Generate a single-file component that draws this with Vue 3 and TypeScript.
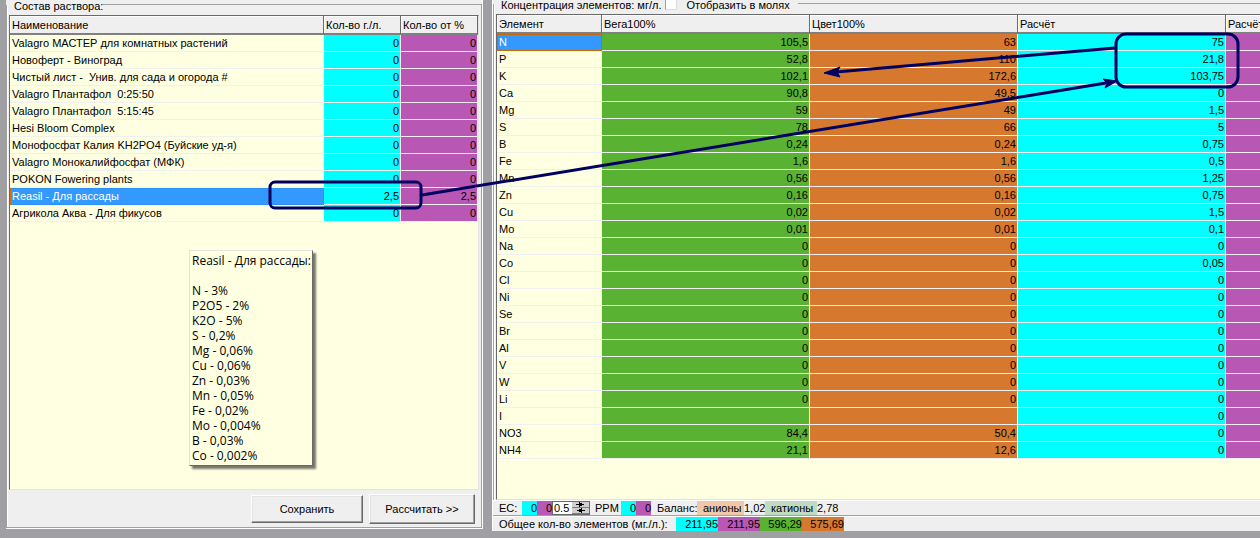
<script setup lang="ts">
import { ref } from 'vue'

interface Fertilizer {
  name: string
  amount: string
  percent: string
}

const fertilizers = ref<Fertilizer[]>([
  { name: 'Valagro МАСТЕР для комнатных растений', amount: '0', percent: '0' },
  { name: 'Новоферт - Виноград', amount: '0', percent: '0' },
  { name: 'Чистый лист -  Унив. для сада и огорода #', amount: '0', percent: '0' },
  { name: 'Valagro Плантафол  0:25:50', amount: '0', percent: '0' },
  { name: 'Valagro Плантафол  5:15:45', amount: '0', percent: '0' },
  { name: 'Hesi Bloom Complex', amount: '0', percent: '0' },
  { name: 'Монофосфат Калия KH2PO4 (Буйские уд-я)', amount: '0', percent: '0' },
  { name: 'Valagro Монокалийфосфат (МФК)', amount: '0', percent: '0' },
  { name: 'POKON Fowering plants', amount: '0', percent: '0' },
  { name: 'Reasil - Для рассады', amount: '2,5', percent: '2,5' },
  { name: 'Агрикола Аква - Для фикусов', amount: '0', percent: '0' },
])
const selected = ref(9)

const elements: [string, string, string, string][] = [
  ['N', '105,5', '63', '75'],
  ['P', '52,8', '110', '21,8'],
  ['K', '102,1', '172,6', '103,75'],
  ['Ca', '90,8', '49,5', '0'],
  ['Mg', '59', '49', '1,5'],
  ['S', '78', '66', '5'],
  ['B', '0,24', '0,24', '0,75'],
  ['Fe', '1,6', '1,6', '0,5'],
  ['Mn', '0,56', '0,56', '1,25'],
  ['Zn', '0,16', '0,16', '0,75'],
  ['Cu', '0,02', '0,02', '1,5'],
  ['Mo', '0,01', '0,01', '0,1'],
  ['Na', '0', '0', '0'],
  ['Co', '0', '0', '0,05'],
  ['Cl', '0', '0', '0'],
  ['Ni', '0', '0', '0'],
  ['Se', '0', '0', '0'],
  ['Br', '0', '0', '0'],
  ['Al', '0', '0', '0'],
  ['V', '0', '0', '0'],
  ['W', '0', '0', '0'],
  ['Li', '0', '0', '0'],
  ['I', '', '', '0'],
  ['NO3', '84,4', '50,4', '0'],
  ['NH4', '21,1', '12,6', '0'],
]

const hint = [
  'N - 3%', 'P2O5 - 2%', 'K2O - 5%', 'S - 0,2%', 'Mg - 0,06%', 'Cu - 0,06%',
  'Zn - 0,03%', 'Mn - 0,05%', 'Fe - 0,02%', 'Mo - 0,004%', 'B - 0,03%', 'Co - 0,002%',
]
const inMoles = ref(false)
const step = ref('0.5')
</script>

<template>
  <main class="window">
    <section class="panel solution">
      <div class="title"><h2>Состав раствора:</h2></div>
      <div class="group">
        <div class="grid-box">
          <table>
            <colgroup><col /><col class="c-amount" /><col class="c-percent" /></colgroup>
            <thead>
              <tr><th>Наименование</th><th>Кол-во г./л.</th><th>Кол-во от %</th></tr>
            </thead>
            <tbody>
              <tr v-for="(f, i) in fertilizers" :key="f.name" @click="selected = i">
                <td :class="{ picked: i === selected }">{{ f.name }}</td>
                <td class="num cyan">{{ f.amount }}</td>
                <td class="num purple">{{ f.percent }}</td>
              </tr>
            </tbody>
          </table>
          <div class="hint" role="tooltip">
            <p class="hint-name">Reasil - Для рассады:</p>
            <p v-for="h in hint" :key="h">{{ h }}</p>
          </div>
        </div>
        <div class="actions">
          <button type="button" class="save">Сохранить</button>
          <button type="button" class="calc">Рассчитать &gt;&gt;</button>
        </div>
      </div>
    </section>

    <section class="panel result">
      <div class="title">
        <h2>Концентрация элементов: мг/л.</h2>
        <label><input v-model="inMoles" type="checkbox" />Отобразить в молях</label>
      </div>
      <div class="group">
        <div class="grid-box">
          <table>
            <colgroup><col class="c-element" /><col /><col /><col /><col /></colgroup>
            <thead>
              <tr><th>Элемент</th><th>Вега100%</th><th>Цвет100%</th><th>Расчёт</th><th>Расчёт</th></tr>
            </thead>
            <tbody>
              <tr v-for="(e, i) in elements" :key="e[0]">
                <td :class="{ focused: i === 0 }">{{ e[0] }}</td>
                <td class="num green">{{ e[1] }}</td>
                <td class="num orange">{{ e[2] }}</td>
                <td class="num cyan">{{ e[3] }}</td>
                <td class="num purple"></td>
              </tr>
            </tbody>
          </table>
        </div>
      </div>
      <div class="status">
        <label for="ec-step" class="ec">EC:</label>
        <output class="short cyan">0</output>
        <output class="short purple">0</output>
        <span class="spin">
          <input id="ec-step" v-model="step" type="text" />
          <span class="arrows">
            <button type="button" aria-label="Больше"><svg viewBox="0 0 16 6"><path d="M7 0h1v1h2v1h2v1h-2v1H8v1H7V3H4V2h3z" /></svg></button>
            <button type="button" aria-label="Меньше"><svg viewBox="0 0 16 6"><path d="M9 0h1v2h3v1h-3v2H9V4H7V3H5V2h2V1h2z" /></svg></button>
          </span>
        </span>
        <span class="ppm">PPM</span>
        <output class="short cyan">0</output>
        <output class="short purple">0</output>
        <span class="balance">Баланс:</span>
        <span class="ions anions">анионы</span>
        <span class="ratio">1,02</span>
        <span class="ions cations">катионы</span>
        <span class="ratio">2,78</span>
      </div>
      <div class="status totals">
        <span class="total-label">Общее кол-во элементов (мг./л.):</span>
        <output class="total cyan">211,95</output>
        <output class="total purple">211,95</output>
        <output class="total green">596,29</output>
        <output class="total orange">575,69</output>
      </div>
    </section>

    <svg class="marks" width="1260" height="538" viewBox="0 0 1260 538" aria-hidden="true">
      <rect x="270" y="182" width="151" height="26" rx="5" />
      <rect x="1116" y="34" width="122" height="53" rx="10" />
      <path d="M1115 48L836 72M422 195L1106 83" />
      <path class="head" d="M824 73L840 67L837 72L840 77z M1117 81L1103 79L1107 83L1105 88z" />
    </svg>
  </main>
</template>

<style>
body {
  margin: 0;
  background: #a09fa3;
}
</style>

<style scoped>
* {
  box-sizing: border-box;
}
.window {
  position: relative;
  display: grid;
  grid-template-columns: 477px minmax(0, 1fr);
  column-gap: 9px;
  min-height: 100vh;
  padding-left: 6px;
  overflow: hidden;
  background: #a09fa3;
  color: #000;
  font: 11px/16px "Liberation Sans", Arial, sans-serif;
}
h2,
p {
  margin: 0;
  font: inherit;
}
.panel {
  display: flex;
  flex-direction: column;
  background: #efefef;
}
.solution {
  margin-bottom: 9px;
  border-right: 1px solid #fff;
  border-bottom: 1px solid #fff;
}
.result {
  margin-bottom: 7px;
  border-left: 1px solid #fff;
}
.title {
  display: flex;
  height: 5px;
  padding-left: 8px;
  line-height: 12px;
  white-space: nowrap;
}
.title::after {
  content: "";
  flex: 1;
  border-bottom: 1px solid #a0a0a0;
}
.title h2,
.title label {
  position: relative;
  z-index: 1;
}
.result .title {
  height: 4px;
  line-height: 10px;
}
.title label {
  display: flex;
  gap: 9px;
  margin-right: 8px;
}
.title input {
  appearance: none;
  width: 12px;
  height: 12px;
  margin: -2px 0 0 4px;
  border: 1px solid #a0a0a0;
  border-right-color: #ddd;
  border-bottom-color: #ddd;
  background: #fff;
}
.group {
  display: flex;
  flex: 1;
  flex-direction: column;
  min-height: 0;
  padding: 10px 2px 0;
  border: 1px solid #a0a0a0;
  border-top: 0;
  box-shadow: inset 1px 0 #fff;
}
.result .group {
  padding-right: 0;
  border-right: 0;
  border-bottom: 0;
}
.grid-box {
  position: relative;
  flex: 1;
  overflow: hidden;
  border: 1px solid #696969;
  border-right-color: #e3e3e3;
  border-bottom-color: #e3e3e3;
  background: #ffffe1;
}
.result .grid-box {
  border-right: 0;
}
table {
  width: 100%;
  table-layout: fixed;
  border-collapse: separate;
  border-spacing: 0;
}
.result table {
  width: 937px;
}
.c-amount,
.c-percent {
  width: 77px;
}
.c-element {
  width: 105px;
}
th {
  height: 19px;
  padding: 0 2px;
  border-right: 1px solid #696969;
  border-bottom: 2px solid #808080;
  box-shadow: inset 1px 1px #fff;
  background: #efefef;
  font-weight: 400;
  text-align: left;
  white-space: nowrap;
}
td {
  height: 17px;
  padding: 0 2px;
  border-right: 1px solid #f0f0f0;
  border-bottom: 1px solid #f0f0f0;
  white-space: pre;
}
.num {
  padding-right: 1px;
  text-align: right;
}
.cyan {
  background: #00ffff;
}
.purple {
  background: #b858b4;
}
.green {
  background: #59b232;
}
.orange {
  background: #d6782e;
}
td.picked,
td.focused {
  padding: 0 1px 1px;
  border: 1px dotted #cc6600;
  background: #3399ff;
  color: #fff;
  line-height: 14px;
}
td.focused {
  border-style: solid;
}
.hint {
  position: absolute;
  top: 234px;
  left: 179px;
  width: max-content;
  padding: 2px 1px 2px 2px;
  border: 1px solid #e3e3e3;
  border-right-color: #696969;
  border-bottom-color: #696969;
  box-shadow: 3px 3px 2px #77776b;
  background: #ffffe1;
  font: 12px/15px "Open Sans", "Noto Sans", sans-serif;
  white-space: nowrap;
}
.hint-name {
  margin-bottom: 15px;
}
.actions {
  display: flex;
  align-items: center;
  justify-content: flex-end;
  gap: 6px;
  height: 37px;
  padding-right: 4px;
}
.actions button {
  padding: 0;
  border: 1px solid #fff;
  border-right-color: #696969;
  border-bottom-color: #696969;
  box-shadow: inset -1px -1px #a0a0a0, inset 1px 1px #e3e3e3;
  background: #efefef;
  color: #000;
  font: inherit;
}
.save {
  width: 112px;
  height: 28px;
}
.calc {
  width: 106px;
  height: 30px;
}
.status {
  display: flex;
  height: 16px;
  padding-left: 6px;
  border-top: 1px solid #fff;
  border-bottom: 1px solid #a0a0a0;
  line-height: 14px;
  white-space: nowrap;
}
.totals {
  height: 15px;
  border-bottom: 0;
}
.ec {
  width: 23px;
}
.short {
  width: 15px;
  text-align: right;
}
.spin {
  display: flex;
  width: 38px;
  border: 1px solid #696969;
  background: #fff;
}
.spin input {
  width: 19px;
  padding: 0 0 0 1px;
  border: 0;
  background: none;
  font: inherit;
}
.arrows {
  flex: 1;
}
.arrows button {
  display: block;
  width: 100%;
  height: 6px;
  padding: 0;
  border: 0;
  border-bottom: 1px solid #808080;
  background: #d0d0d0;
}
.arrows svg {
  display: block;
  width: 16px;
  height: 6px;
}
.ppm {
  width: 31px;
  padding-left: 5px;
}
.balance {
  width: 46px;
  padding-left: 6px;
}
.ions {
  padding: 0 2px 0 6px;
}
.anions {
  width: 47px;
  background: #f0c8a8;
}
.cations {
  width: 52px;
  background: #c0dcc0;
}
.ratio {
  width: 21px;
}
.total-label {
  width: 177px;
}
.total {
  width: 42px;
  text-align: right;
}
.marks {
  position: absolute;
  top: 0;
  left: 0;
  fill: none;
  stroke: #000060;
  stroke-width: 3;
  pointer-events: none;
}
.head {
  fill: #000060;
  stroke-width: 1;
}
</style>
